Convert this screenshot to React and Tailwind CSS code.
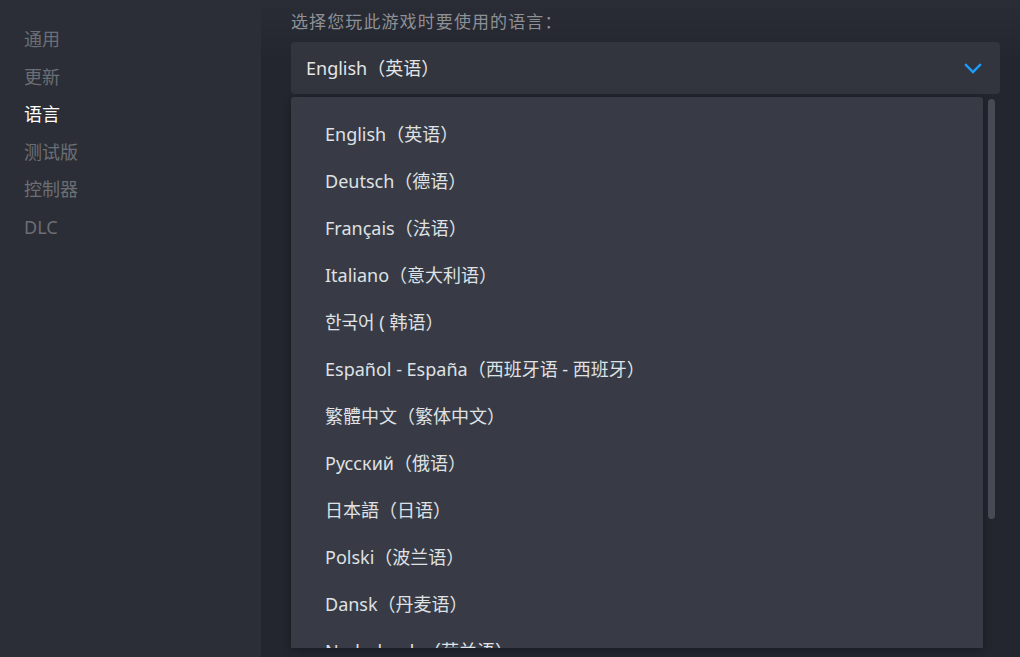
import React from "react";

const navItems = ["通用", "更新", "语言", "测试版", "控制器", "DLC"];

const languages = [
  "English（英语）",
  "Deutsch（德语）",
  "Français（法语）",
  "Italiano（意大利语）",
  "한국어 ( 韩语）",
  "Español - España（西班牙语 - 西班牙）",
  "繁體中文（繁体中文）",
  "Русский（俄语）",
  "日本語（日语）",
  "Polski（波兰语）",
  "Dansk（丹麦语）",
  "Nederlands（荷兰语）",
  "Português - Portugal（葡萄牙语 - 葡萄牙）",
];

const font = {
  fontFamily: '"Noto Sans", "Noto Sans CJK SC", sans-serif',
};

export default function App() {
  return (
    <div
      className="w-[1020px] h-[657px] flex bg-[#23262e] overflow-hidden"
      style={font}
    >
      {/* Sidebar */}
      <div className="w-[261px] h-full bg-[#2b2e36] flex flex-col pt-[27px] pl-[24px]">
        {navItems.map((item) => (
          <div
            key={item}
            className={`h-[37.6px] text-[18px] leading-[24px] ${
              item === "语言" ? "text-white" : "text-[#6b6e75]"
            }`}
          >
            {item}
          </div>
        ))}
      </div>

      {/* Main */}
      <div className="flex-1 h-full flex flex-col pl-[30px] pr-[20px] bg-gradient-to-b from-[#2a2d35] to-[#23262e] to-[60px]">
        <div className="pt-[11px] h-[42px] text-[17px] leading-[22px] tracking-[1.1px] text-[#8d9096]">
          选择您玩此游戏时要使用的语言：
        </div>

        {/* Select */}
        <div className="h-[52px] rounded-[4px] bg-[#32353d] flex items-center justify-between pl-[15px] pr-[18px]">
          <span className="text-[18px] text-[#e4e5e7]">English（英语）</span>
          <svg width="18" height="11" viewBox="0 0 18 11" fill="none">
            <path
              d="M2 2 L9 9 L16 2"
              stroke="#1a9fff"
              strokeWidth="2.4"
              strokeLinecap="square"
            />
          </svg>
        </div>

        {/* Dropdown */}
        <div className="flex mt-[3px] h-[551px] gap-[5px]">
          <div className="w-[692px] h-full bg-[#383b45] rounded-t-[3px] overflow-hidden pt-[14px] shadow-[0_2px_8px_rgba(0,0,0,0.3)]">
            {languages.map((lang) => (
              <div
                key={lang}
                className="h-[47px] flex items-center pl-[34px] text-[18px] text-[#dfe1e4]"
              >
                {lang}
              </div>
            ))}
          </div>
          <div className="pt-[2px]">
            <div className="w-[7px] h-[420px] rounded-full bg-[#464a54]" />
          </div>
        </div>
      </div>
    </div>
  );
}
